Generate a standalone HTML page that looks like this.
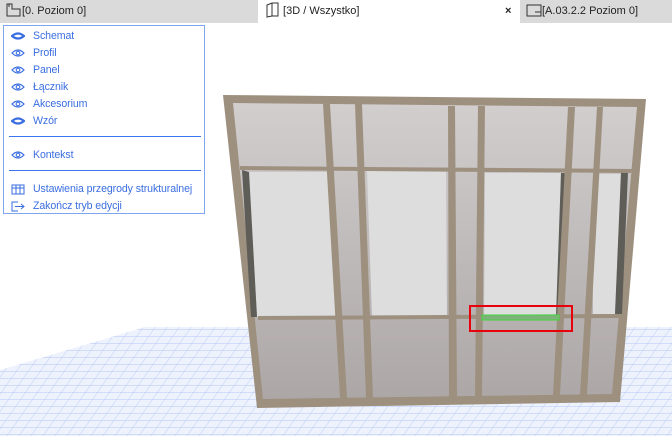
<!DOCTYPE html>
<html><head><meta charset="utf-8"><style>
*{margin:0;padding:0;box-sizing:border-box}
body{width:672px;height:436px;overflow:hidden;background:#fff;font-family:"Liberation Sans",sans-serif;position:relative}
.bar{position:absolute;left:0;top:0;width:672px;height:23px;background:#dadada}
.tab{position:absolute;top:0;height:23px;font-size:11px;line-height:23px;color:#222;white-space:nowrap}
.menu{position:absolute;left:3px;top:25px;width:202px;height:189px;border:1px solid #7ea6ee;background:#fff}
.it{position:absolute;left:7px;font-size:10.6px;color:#3a6ee0;white-space:nowrap;height:14px;line-height:14px}
.it svg{position:absolute;left:0;top:2px}
.it span{position:absolute;left:22px;top:0;letter-spacing:-0.1px}
.sep{position:absolute;left:5px;width:192px;height:1px;background:#3a74f0}
</style></head><body>
<svg width="672" height="436" style="position:absolute;left:0;top:0">
<defs>
<pattern id="g" width="12" height="7" patternUnits="userSpaceOnUse" patternTransform="skewX(-35)">
<rect width="12" height="7" fill="#edf2fd"/><path d="M0 0H12M0 0V7" stroke="#a9c0f2" stroke-width="0.8"/></pattern>
<linearGradient id="p" x1="0" y1="0" x2="0" y2="1"><stop offset="0" stop-color="#d2cece"/><stop offset="1" stop-color="#aca7a6"/></linearGradient>
<symbol id="eye" viewBox="0 0 14 10"><path d="M1 5Q7 -1 13 5Q7 11 1 5Z" fill="none" stroke="#3a6ee0" stroke-width="1.2"/><circle cx="7" cy="5" r="1.8" fill="none" stroke="#3a6ee0" stroke-width="1.1"/></symbol>
<symbol id="ceye" viewBox="0 0 14 10"><path d="M1 5Q7 0 13 5Q7 10 1 5Z" fill="none" stroke="#3a6ee0" stroke-width="2.2"/></symbol>
</defs>
<polygon points="0,370 145,327 672,327 672,436 0,436" fill="url(#g)"/>
<polygon points="223,95 646,99 620,402 257,408" fill="#9e907f"/>
<polygon points="233,103 637,107 612,394 263,399" fill="url(#p)"/>
<polygon points="249,172 333,172 336,317 257,317" fill="#dcdddc"/>
<polygon points="242,170 249,172 257,317 251,317" fill="#5e5d58"/>
<polygon points="367,171 446,171 447,317 372,318" fill="#dcdddc"/>
<polygon points="485,173 561,173 558,316 484,316" fill="#dcdddc"/>
<polygon points="561,173 567,173 562,316 556,316" fill="#5e5d58"/>
<polygon points="593,174 621,174 615,314 593,314" fill="#dcdddc"/>
<polygon points="621,172 628,172 622,314 615,314" fill="#5e5d58"/>
<polygon points="240,166 632,169 631,173 240,170" fill="#9e907f"/>
<polygon points="258,316 620,314 620,318 258,320" fill="#9e907f"/>
<g fill="#9e907f">
<polygon points="323,104 330,104 347,398 340,398"/>
<polygon points="355,104 362,104 373,398 366,398"/>
<polygon points="448,106 455,106 457,397 449,397"/>
<polygon points="478,106 485,106 482,396 475,396"/>
<polygon points="568,107 575,107 560,395 553,395"/>
<polygon points="597,107 603,107 587,395 580,395"/>
</g>
<rect x="470" y="306" width="102" height="25" fill="none" stroke="#e8000d" stroke-width="2"/>
<rect x="482" y="315" width="77" height="5" fill="#7fb27a" stroke="#3fd83f" stroke-width="1"/>
</svg>
<div class="bar"></div>
<div class="tab" style="left:258px;width:262px;background:#fff"></div>
<div class="tab" style="left:6px"><svg width="16" height="14" style="vertical-align:-3px"><path d="M1 1h5v5h8v7H1z M3 1v3" fill="none" stroke="#333"/></svg>[0. Poziom 0]</div>
<div class="tab" style="left:266px"><svg width="14" height="16" style="vertical-align:-4px"><path d="M1 3l5-2h6v13H6l-5 1zM6 1v13" fill="none" stroke="#333"/></svg> [3D / Wszystko]</div>
<div class="tab" style="left:505px;font-weight:bold">×</div>
<div class="tab" style="left:526px"><svg width="16" height="14" style="vertical-align:-3px"><path d="M1 2h14v11H1zM9 9h6" fill="none" stroke="#333"/></svg>[A.03.2.2 Poziom 0]</div>
<div class="menu">
<div class="it" style="top:3px"><svg width="14" height="10"><use href="#ceye"/></svg><span>Schemat</span></div>
<div class="it" style="top:20px"><svg width="14" height="10"><use href="#eye"/></svg><span>Profil</span></div>
<div class="it" style="top:37px"><svg width="14" height="10"><use href="#eye"/></svg><span>Panel</span></div>
<div class="it" style="top:54px"><svg width="14" height="10"><use href="#eye"/></svg><span>Łącznik</span></div>
<div class="it" style="top:71px"><svg width="14" height="10"><use href="#eye"/></svg><span>Akcesorium</span></div>
<div class="it" style="top:88px"><svg width="14" height="10"><use href="#ceye"/></svg><span>Wzór</span></div>
<div class="sep" style="top:110px"></div>
<div class="it" style="top:122px"><svg width="14" height="10"><use href="#eye"/></svg><span>Kontekst</span></div>
<div class="sep" style="top:144px"></div>
<div class="it" style="top:156px"><svg width="14" height="11"><path d="M1 1h12v9H1zM1 4h12M5 1v9M9 1v9" fill="none" stroke="#3a6ee0"/></svg><span>Ustawienia przegrody strukturalnej</span></div>
<div class="it" style="top:173px"><svg width="14" height="11"><path d="M7 1H1v9h6M4 5.5h9M10 3l3 2.5-3 2.5" fill="none" stroke="#3a6ee0"/></svg><span>Zakończ tryb edycji</span></div>
</div>
</body></html>
